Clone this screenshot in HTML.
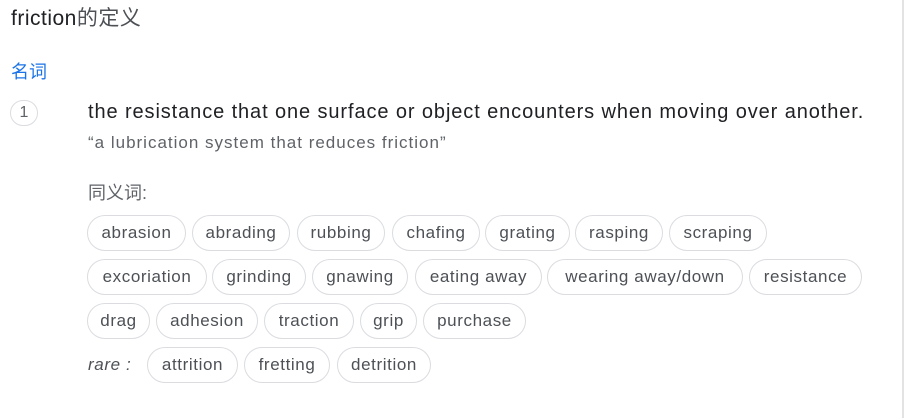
<!DOCTYPE html>
<html><head><meta charset="utf-8"><style>
body{margin:0;width:911px;height:418px;background:#fff;position:relative;overflow:hidden;font-family:"Liberation Sans","Noto Sans CJK SC",sans-serif;}
.a{position:absolute;white-space:nowrap}
.c{position:absolute;height:34px;border:1px solid #dadce0;border-radius:18px;box-sizing:content-box;color:#4d5156;font-size:17px;letter-spacing:0.6px;line-height:34px;text-align:center;white-space:nowrap}
</style></head><body>
<div class="a" style="left:902px;top:0;width:2px;height:418px;background:#e3e3e3"></div>
<div class="a" style="left:11px;top:2px;font-size:21px;letter-spacing:0.5px;color:#202124">friction<span style="color:#4d5156">的定义</span></div>
<div class="a" style="left:11px;top:58px;font-size:18px;color:#1a73e8">名词</div>
<div class="a" style="left:10px;top:100px;width:26px;height:24px;border:1px solid #dadce0;border-radius:13px;text-align:center;line-height:24px;font-size:16px;color:#5f6368">1</div>
<div class="a" style="left:88px;top:101px;font-size:20px;letter-spacing:0.9px;color:#202124">the resistance that one surface or object encounters when moving over another.</div>
<div class="a" style="left:88px;top:133px;font-size:17px;letter-spacing:1px;color:#5f6368">“a lubrication system that reduces friction”</div>
<div class="a" style="left:88px;top:179px;font-size:18px;color:#5f6368">同义词:</div>

<div class="c" style="left:87px;top:215px;width:97px">abrasion</div>
<div class="c" style="left:192px;top:215px;width:96px">abrading</div>
<div class="c" style="left:297px;top:215px;width:86px">rubbing</div>
<div class="c" style="left:392px;top:215px;width:86px">chafing</div>
<div class="c" style="left:485px;top:215px;width:83px">grating</div>
<div class="c" style="left:575px;top:215px;width:86px">rasping</div>
<div class="c" style="left:669px;top:215px;width:96px">scraping</div>

<div class="c" style="left:87px;top:259px;width:118px">excoriation</div>
<div class="c" style="left:212px;top:259px;width:92px">grinding</div>
<div class="c" style="left:312px;top:259px;width:94px">gnawing</div>
<div class="c" style="left:415px;top:259px;width:125px">eating away</div>
<div class="c" style="left:547px;top:259px;width:194px">wearing away/down</div>
<div class="c" style="left:749px;top:259px;width:111px">resistance</div>

<div class="c" style="left:87px;top:303px;width:61px">drag</div>
<div class="c" style="left:156px;top:303px;width:100px">adhesion</div>
<div class="c" style="left:264px;top:303px;width:88px">traction</div>
<div class="c" style="left:360px;top:303px;width:55px">grip</div>
<div class="c" style="left:423px;top:303px;width:101px">purchase</div>

<div class="a" style="left:88px;top:355px;font-size:17px;font-style:italic;letter-spacing:0.6px;color:#4d5156">rare :</div>
<div class="c" style="left:147px;top:347px;width:89px">attrition</div>
<div class="c" style="left:244px;top:347px;width:84px">fretting</div>
<div class="c" style="left:337px;top:347px;width:92px">detrition</div>
</body></html>
